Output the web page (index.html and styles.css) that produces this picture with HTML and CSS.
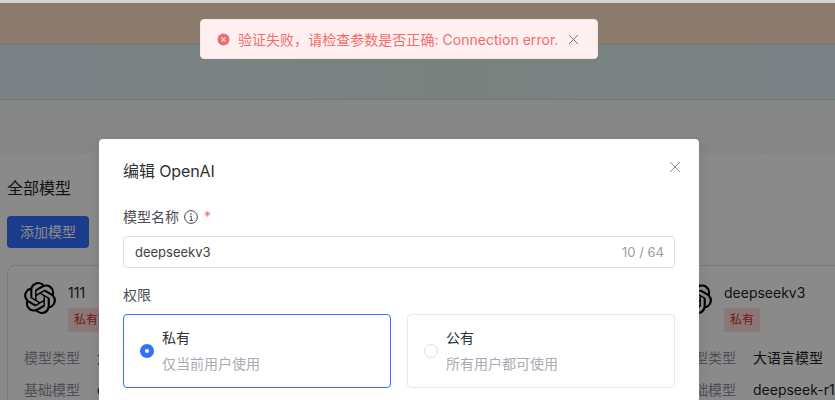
FILE: index.html
```html
<!DOCTYPE html>
<html lang="zh">
<head>
<meta charset="utf-8">
<title>编辑 OpenAI</title>
<link rel="stylesheet" href="styles.css">
</head>
<body>
<svg class="defs" width="0" height="0" aria-hidden="true">
  <symbol id="openai" viewBox="0 0 24 24"><path d="M22.2819 9.8211a5.9847 5.9847 0 0 0-.5157-4.9108 6.0462 6.0462 0 0 0-6.5098-2.9A6.0651 6.0651 0 0 0 4.9807 4.1818a5.9847 5.9847 0 0 0-3.9977 2.9 6.0462 6.0462 0 0 0 .7427 7.0966 5.98 5.98 0 0 0 .511 4.9107 6.051 6.051 0 0 0 6.5146 2.9001A5.9847 5.9847 0 0 0 13.2599 24a6.0557 6.0557 0 0 0 5.7718-4.2058 5.9894 5.9894 0 0 0 3.9977-2.9001 6.0557 6.0557 0 0 0-.7475-7.0729zm-9.022 12.6081a4.4755 4.4755 0 0 1-2.8764-1.0408l.1419-.0804 4.7783-2.7582a.7948.7948 0 0 0 .3927-.6813v-6.7369l2.02 1.1686a.071.071 0 0 1 .038.052v5.5826a4.504 4.504 0 0 1-4.4945 4.4944zm-9.6607-4.1254a4.4708 4.4708 0 0 1-.5346-3.0137l.142.0852 4.783 2.7582a.7712.7712 0 0 0 .7806 0l5.8428-3.3685v2.3324a.0804.0804 0 0 1-.0332.0615L9.74 19.9502a4.4992 4.4992 0 0 1-6.1408-1.6464zM2.3408 7.8956a4.485 4.485 0 0 1 2.3655-1.9728V11.6a.7664.7664 0 0 0 .3879.6765l5.8144 3.3543-2.0201 1.1685a.0757.0757 0 0 1-.071 0l-4.8303-2.7865A4.504 4.504 0 0 1 2.3408 7.872zm16.5963 3.8558L13.1038 8.364 15.1192 7.2a.0757.0757 0 0 1 .071 0l4.8303 2.7913a4.4944 4.4944 0 0 1-.6765 8.1042v-5.6772a.79.79 0 0 0-.407-.667zm2.0107-3.0231l-.142-.0852-4.7735-2.7818a.7759.7759 0 0 0-.7854 0L9.409 9.2297V6.8974a.0662.0662 0 0 1 .0284-.0615l4.8303-2.7866a4.4992 4.4992 0 0 1 6.6802 4.66zM8.3065 12.863l-2.02-1.1638a.0804.0804 0 0 1-.038-.0567V6.0742a4.4992 4.4992 0 0 1 7.3757-3.4537l-.142.0805L8.704 5.459a.7948.7948 0 0 0-.3927.6813zm1.0976-2.3654l2.602-1.4998 2.6069 1.4998v2.9994l-2.5974 1.4997-2.6067-1.4997Z"/></symbol>
</svg>
<div class="strip"></div>
<div class="stage">
  <main class="page">
    <div class="band band-top"></div>
    <div class="band band-mid"></div>
    <div class="band band-low"></div>
    <section class="content">
      <h2 class="heading">全部模型</h2>
      <button class="add-btn" type="button">添加模型</button>
      <div class="cards">
        <article class="card">
          <div class="card-head">
            <svg class="logo"><use href="#openai"/></svg>
            <div class="card-id">
              <div class="card-name">111</div>
              <span class="tag">私有</span>
            </div>
          </div>
          <div class="row"><span class="row-key">模型类型</span><span class="row-val">大语言模型</span></div>
          <div class="row"><span class="row-key">基础模型</span><span class="row-val">deepseek-r1</span></div>
        </article>
        <article class="card">
          <div class="card-head">
            <svg class="logo"><use href="#openai"/></svg>
            <div class="card-id">
              <div class="card-name">deepseekv3</div>
              <span class="tag">私有</span>
            </div>
          </div>
          <div class="row"><span class="row-key">模型类型</span><span class="row-val">大语言模型</span></div>
          <div class="row"><span class="row-key">基础模型</span><span class="row-val">deepseek-r1</span></div>
        </article>
      </div>
    </section>
  </main>
  <div class="overlay"></div>
  <div class="modal">
    <header class="modal-head">
      <h3 class="modal-title">编辑 OpenAI</h3>
      <svg class="close modal-close" viewBox="0 0 12 12"><path d="M1 1l10 10M11 1L1 11"/></svg>
    </header>
    <div class="label">模型名称
      <svg class="info" viewBox="0 0 14 14"><circle cx="7" cy="7" r="6.4"/><path d="M5.6 6.2H7.2V10.4M5.5 10.4H9"/><circle class="info-dot" cx="7" cy="4" r=".8"/></svg>
      <span class="star">*</span>
    </div>
    <div class="input">
      <span class="input-text">deepseekv3</span>
      <span class="counter">10 / 64</span>
    </div>
    <div class="label label-perm">权限</div>
    <div class="options">
      <div class="option option-on">
        <span class="radio radio-on"></span>
        <div>
          <div class="opt-title">私有</div>
          <div class="opt-desc">仅当前用户使用</div>
        </div>
      </div>
      <div class="option">
        <span class="radio"></span>
        <div>
          <div class="opt-title">公有</div>
          <div class="opt-desc">所有用户都可使用</div>
        </div>
      </div>
    </div>
  </div>
  <div class="toast">
    <svg class="toast-icon" viewBox="0 0 14 14"><circle cx="7" cy="7" r="6.5"/><path d="M5 5l4 4M9 5l-4 4"/></svg>
    <span class="toast-text">验证失败，请检查参数是否正确: Connection error.</span>
    <svg class="close toast-close" viewBox="0 0 12 12"><path d="M1 1l10 10M11 1L1 11"/></svg>
  </div>
</div>
</body>
</html>
```

FILE: styles.css
```css
* { box-sizing: border-box; }
html, body { margin: 0; height: 100%; overflow: hidden; }
body {
  font-family: Inter, "Noto Sans CJK SC", sans-serif;
  font-size: 14px;
  display: flex;
  flex-direction: column;
  background: #fff;
  color: #1f2329;
}
.defs { position: absolute; }
.strip { height: 3px; background: #d4d4d4; flex: none; }
.stage { position: relative; flex: 1; overflow: hidden; }
.page { height: 100%; }
.band-top { height: 41px; background: #ffe3c9; }
.band-mid {
  height: 56px;
  background: linear-gradient(90deg, #e3f0f7 0%, #e2f0ec 55%, #e3f0f7 100%);
  border-top: 1px solid #dcdcdc;
  border-bottom: 1px solid #dcdde0;
}
.band-low { height: 53px; background: linear-gradient(180deg, #f8f9fa, #f5f6f7); }
.content { background: #fff; padding: 25px 0 0 7px; width: 835px; }
.heading { margin: 0; font-size: 16px; line-height: 20px; font-weight: 400; color: #1f2329; }
.add-btn {
  display: block;
  margin: 18px 0 17px;
  width: 82px;
  height: 32px;
  border: 0;
  border-radius: 4px;
  background: #3370ff;
  color: #fff;
  font: inherit;
  padding: 0 0 2px;
}
.cards { display: grid; grid-template-columns: 641px 640px; column-gap: 15px; }
.card {
  height: 220px;
  border: 1px solid #dee0e3;
  border-radius: 8px;
  padding: 16px;
}
.card-head { display: flex; gap: 12px; margin-bottom: 10px; }
.logo { width: 32px; height: 32px; flex: none; fill: #000; }
.card-name { line-height: 22px; color: #1f2329; }
.tag {
  display: block;
  width: 36px;
  height: 24px;
  margin-top: 4px;
  border-radius: 2px;
  background: #fdd;
  color: #d43030;
  font-size: 12px;
  line-height: 24px;
  text-align: center;
}
.row { display: flex; gap: 17px; height: 32px; line-height: 32px; }
.row-key { width: 56px; color: #8f959e; }
.row-val { color: #1f2329; }
.overlay { position: absolute; inset: 0; background: rgba(0, 0, 0, .46); }
.modal {
  position: absolute;
  left: 99px;
  top: 136px;
  width: 600px;
  height: 400px;
  padding: 20px 24px;
  background: #fff;
  border-radius: 4px;
  box-shadow: 0 6px 16px rgba(0, 0, 0, .08);
}
.modal-head { display: flex; justify-content: space-between; height: 24px; margin-bottom: 23px; }
.modal-title { margin: 0; font-size: 16px; line-height: 24px; font-weight: 400; color: #303133; letter-spacing: -.1px; }
.close { fill: none; stroke-width: 1; flex: none; }
.modal-close { width: 12px; height: 12px; margin: 2px -6px 0 0; stroke: #8b8e96; }
.label { display: flex; align-items: center; height: 22px; line-height: 22px; color: #4a4c52; }
.info { width: 14px; height: 14px; margin-left: 5px; fill: none; stroke: #45474c; stroke-width: 1; }
.info-dot { fill: #45474c; stroke: none; }
.star { margin-left: 6px; color: #f56c6c; font-size: 14px; }
.input {
  display: flex;
  align-items: center;
  justify-content: space-between;
  height: 32px;
  margin-top: 8px;
  padding: 0 11px;
  border: 1px solid #dcdfe6;
  border-radius: 4px;
  color: #3f4147;
  font-size: 13px;
}
.counter { color: #9a9da5; font-size: 13px; margin-right: -1px; }
.label-perm { margin-top: 16px; }
.options { display: grid; grid-template-columns: 268px 268px; column-gap: 16px; margin-top: 8px; }
.option {
  display: flex;
  align-items: center;
  gap: 8px;
  height: 74px;
  padding: 0 16px;
  border: 1px solid #e4e7ed;
  border-radius: 4px;
}
.option-on { border-color: #3370ff; }
.radio {
  width: 14px;
  height: 14px;
  flex: none;
  border: 1px solid #dcdfe6;
  border-radius: 50%;
  background: #fff;
}
.radio-on { border: 5px solid #3370ff; }
.opt-title { line-height: 22px; color: #303133; }
.opt-desc { margin-top: 4px; line-height: 22px; color: #a8abb2; }
.toast {
  position: absolute;
  left: 200px;
  top: 16px;
  width: 398px;
  height: 40px;
  display: flex;
  align-items: center;
  padding: 0 18px 0 16px;
  background: #fef0f0;
  border: 1px solid #fde2e2;
  border-radius: 4px;
  color: #f56c6c;
}
.toast-icon { width: 13px; height: 13px; flex: none; margin-right: 8px; fill: #f56c6c; stroke: #fff; stroke-width: 1.2; }
.toast-icon circle { stroke: none; }
.toast-text { flex: 1; white-space: nowrap; letter-spacing: .03px; }
.toast-close { width: 11px; height: 11px; stroke: #6b6e76; }
```
